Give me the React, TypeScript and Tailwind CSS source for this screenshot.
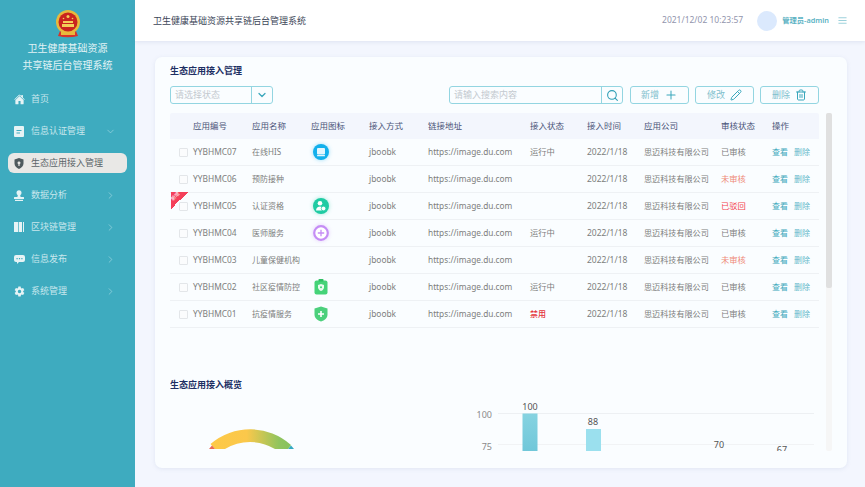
import { IoHome, IoSettingsSharp } from "react-icons/io5";
import { LuPlus, LuPencil, LuTrash2, LuMenu, LuChevronDown, LuChevronRight, LuSearch } from "react-icons/lu";
import type { ReactNode } from "react";

const cols = "grid grid-cols-[23px_59px_59px_58px_59px_102px_57px_57px_77px_51px_47px] items-center";

function Emblem() {
    return (
        <svg width="26" height="28" viewBox="0 0 26 28">
            <path d="M5 21 Q13 28 21 21 L23 26 Q13 28.500 3 26 Z" fill="#d8332a"/>
            <circle cx="13" cy="12" r="12" fill="#e8b93c"/>
            <circle cx="13" cy="12" r="9.500" fill="#c9241f"/>
            <circle cx="13" cy="6.500" r="1.500" fill="#f3cf57"/>
            <circle cx="8.500" cy="8.500" r="0.800" fill="#f3cf57"/>
            <circle cx="17.500" cy="8.500" r="0.800" fill="#f3cf57"/>
            <rect x="8" y="11" width="10" height="2" fill="#f3cf57"/>
            <rect x="7" y="14" width="12" height="3" fill="#f3cf57"/>
            <path d="M6 22 H20 V25 H6 Z" fill="#e8b93c"/>
        </svg>
    );
}

function IconForm() {
    return (
        <svg width="10" height="11" viewBox="0 0 10 11" fill="currentColor">
            <path fillRule="evenodd" d="M1 0h8a1 1 0 0 1 1 1v9a1 1 0 0 1-1 1H1a1 1 0 0 1-1-1V1a1 1 0 0 1 1-1zM2.500 4v1h5V4zM2.500 6.500v1H6v-1z"/>
        </svg>
    );
}

function IconShield() {
    return (
        <svg width="10" height="11" viewBox="0 0 10 11" fill="currentColor">
            <path fillRule="evenodd" d="M5 0l4.500 1.600v4C9.500 8 7.500 10 5 11 2.500 10 .5 8 .5 5.600v-4zM5 3.500a1.400 1.400 0 0 0-.6 2.700V8h1.200V6.200A1.400 1.400 0 0 0 5 3.500z"/>
        </svg>
    );
}

function IconStamp() {
    return (
        <svg width="10" height="11" viewBox="0 0 10 11" fill="currentColor">
            <circle cx="5" cy="2.700" r="2.500"/>
            <path d="M3.800 5h2.400l.4 2H9.500a.5.5 0 0 1 .5.5V9H0V7.500A.5.5 0 0 1 .5 7h2.900z"/>
            <rect x="1" y="9.800" width="8" height="1.200"/>
        </svg>
    );
}

function IconBook() {
    return (
        <svg width="10" height="10" viewBox="0 0 10 10" fill="currentColor">
            <rect x="0" y="0" width="4.300" height="10"/>
            <rect x="5" y="0" width="3" height="10"/>
            <rect x="9" y="0" width="1" height="10"/>
        </svg>
    );
}

function IconChat() {
    return (
        <svg width="11" height="9" viewBox="0 0 11 9" fill="currentColor">
            <path fillRule="evenodd" d="M2 0h7a2 2 0 0 1 2 2v3a2 2 0 0 1-2 2H5L3 9V7H2a2 2 0 0 1-2-2V2a2 2 0 0 1 2-2zM2.500 3v1.200h1.200V3zM4.900 3v1.200h1.200V3zM7.300 3v1.200h1.200V3z"/>
        </svg>
    );
}

function NavItem({icon, label, arrow, active}: { icon: ReactNode; label: string; arrow?: "down" | "right"; active?: boolean }) {
    return (
        <div className={`flex h-5 w-[119px] items-center rounded-md pl-[6px] pr-[11px] ${active ? "bg-[#e9e8e6] text-[#5b6468]" : "text-[#c8e7ed]"}`}>
            <span className={`flex w-[17px] shrink-0 items-center ${active ? "text-[#4f5a5e]" : "text-[#e6f3f5]"}`}>{icon}</span>
            <span className="flex-1 text-[9px]">{label}</span>
            {arrow === "down" && <LuChevronDown strokeWidth={1.5} className="h-[11px] w-[11px] text-[#9fd6e0]"/>}
            {arrow === "right" && <LuChevronRight strokeWidth={1.5} className="h-[11px] w-[11px] text-[#9fd6e0]"/>}
        </div>
    );
}

function Sidebar() {
    return (
        <aside className="flex h-full w-[135px] shrink-0 flex-col items-center bg-[#3eabbf]">
            <div className="mt-[10px]"><Emblem/></div>
            <div className="mt-[2px] text-center text-[10px] leading-[17px] text-[#e2f3f6]">
                <div>卫生健康基础资源</div>
                <div>共享链后台管理系统</div>
            </div>
            <nav className="mt-[15px] flex flex-col gap-3">
                <NavItem icon={<IoHome className="h-[11px] w-[11px]"/>} label="首页"/>
                <NavItem icon={<IconForm/>} label="信息认证管理" arrow="down"/>
                <NavItem icon={<IconShield/>} label="生态应用接入管理" active/>
                <NavItem icon={<IconStamp/>} label="数据分析" arrow="right"/>
                <NavItem icon={<IconBook/>} label="区块链管理" arrow="right"/>
                <NavItem icon={<IconChat/>} label="信息发布" arrow="right"/>
                <NavItem icon={<IoSettingsSharp className="h-[11px] w-[11px]"/>} label="系统管理" arrow="right"/>
            </nav>
        </aside>
    );
}

function Header() {
    return (
        <header className="flex h-[41px] shrink-0 items-center bg-white pl-[18px] pr-[17px] shadow-[0_1px_4px_rgba(120,140,180,0.18)]">
            <span className="flex-1 text-[9px] text-[#3c4658]">卫生健康基础资源共享链后台管理系统</span>
            <span className="text-[8.500px] text-[#9295ad]">2021/12/02 10:23:57</span>
            <span className="ml-[14px] h-5 w-5 rounded-full bg-[#dbe9fd]"/>
            <span className="ml-[5px] text-[7.300px] font-semibold text-[#5db3c4]">管理员-admin</span>
            <LuMenu strokeWidth={1.5} className="ml-[8px] h-[11px] w-[11px] text-[#6fbccb]"/>
        </header>
    );
}

function ActionButton({label, icon}: { label: string; icon: ReactNode }) {
    return (
        <button className="flex h-[18px] w-[59px] items-center justify-center gap-[5px] rounded-[3px] border border-[#93d5e1] text-[9px] text-[#7fc0cd]">
            {label}
            <span className="text-[#3aa7bc]">{icon}</span>
        </button>
    );
}

function Toolbar() {
    return (
        <div className="flex items-center">
            <div className="flex h-[18px] w-[103px] rounded-[3px] border border-[#93d5e1]">
                <span className="flex-1 pl-1 text-[9px] leading-4 text-[#c3c9cf]">请选择状态</span>
                <span className="flex w-[21px] items-center justify-center border-l border-[#93d5e1] text-[#3aa7bc]">
                    <LuChevronDown strokeWidth={2.500} className="h-3 w-3"/>
                </span>
            </div>
            <div className="ml-[176px] flex h-[18px] w-[174px] rounded-[3px] border border-[#93d5e1]">
                <span className="flex-1 pl-1 text-[9px] leading-4 text-[#c3c9cf]">请输入搜索内容</span>
                <span className="flex w-[21px] items-center justify-center border-l border-[#93d5e1] text-[#2f9fb6]">
                    <LuSearch strokeWidth={2} className="h-[13px] w-[13px]"/>
                </span>
            </div>
            <div className="ml-[7px] flex gap-[6px]">
                <ActionButton label="新增" icon={<LuPlus strokeWidth={1.750} className="h-[14px] w-[14px]"/>}/>
                <ActionButton label="修改" icon={<LuPencil strokeWidth={2} className="h-3 w-3"/>}/>
                <ActionButton label="删除" icon={<LuTrash2 strokeWidth={2} className="h-3 w-3"/>}/>
            </div>
        </div>
    );
}

function AppIcon({kind}: { kind: string }) {
    if (kind === "blue") {
        return (
            <svg width="18" height="18" viewBox="0 0 18 18" className="drop-shadow-[0_0_2px_rgba(18,176,236,0.4)]">
                <circle cx="9" cy="9" r="8" fill="#12b0ec"/>
                <rect x="5" y="5" width="8" height="6.500" rx="1" fill="#e4f6fd"/>
                <rect x="5" y="12" width="8" height="1.200" rx=".5" fill="#e4f6fd"/>
            </svg>
        );
    }
    if (kind === "teal") {
        return (
            <svg width="18" height="18" viewBox="0 0 18 18" className="drop-shadow-[0_0_2px_rgba(31,203,163,0.4)]">
                <circle cx="9" cy="9" r="8" fill="#1fcba3"/>
                <circle cx="8" cy="6.300" r="2.300" fill="#fff"/>
                <path d="M4 13.500c0-2.500 2-4 4-4 .8 0 1.300.2 1.800.5v3.500z" fill="#fff"/>
                <circle cx="11.500" cy="11.500" r="2.300" fill="#fff" stroke="#1fcba3" strokeWidth=".7"/>
            </svg>
        );
    }
    if (kind === "purple") {
        return (
            <svg width="18" height="18" viewBox="0 0 18 18" className="drop-shadow-[0_0_2px_rgba(197,141,245,0.4)]">
                <circle cx="9" cy="9" r="6.800" fill="#fff" stroke="#c58df5" strokeWidth="2.200"/>
                <path d="M9 5.800v6.400M5.800 9h6.400" stroke="#c58df5" strokeWidth="1.300"/>
            </svg>
        );
    }
    if (kind === "clip") {
        return (
            <svg width="18" height="18" viewBox="0 0 18 18">
                <rect x="2.500" y="2.500" width="13" height="14" rx="2" fill="#45d378"/>
                <rect x="6.500" y="1" width="5" height="2.500" rx=".8" fill="#2fbf63"/>
                <path d="M9 6l3 1v2.500c0 1.600-1.300 2.800-3 3.500-1.700-.7-3-1.900-3-3.500V7z" fill="#e8fbef"/>
                <circle cx="9" cy="9.300" r="1" fill="#45d378"/>
            </svg>
        );
    }
    return (
        <svg width="18" height="18" viewBox="0 0 18 18">
            <path d="M9 1.500l6.500 2v6c0 3.500-3 6-6.500 7-3.500-1-6.500-3.500-6.500-7v-6z" fill="#4cd07c"/>
            <path d="M9 6v6M6 9h6" stroke="#fff" strokeWidth="1.600"/>
        </svg>
    );
}

const rows = [
    {id: "YYBHMC07", name: "在线HIS", icon: "blue", status: "运行中", audit: "已审核"},
    {id: "YYBHMC06", name: "预防接种", icon: "", status: "", audit: "未审核"},
    {id: "YYBHMC05", name: "认证资格", icon: "teal", status: "", audit: "已驳回", isNew: true},
    {id: "YYBHMC04", name: "医师服务", icon: "purple", status: "运行中", audit: "已审核"},
    {id: "YYBHMC03", name: "儿童保健机构", icon: "", status: "", audit: "未审核"},
    {id: "YYBHMC02", name: "社区疫情防控", icon: "clip", status: "运行中", audit: "已审核"},
    {id: "YYBHMC01", name: "抗疫情服务", icon: "shield", status: "禁用", audit: "已审核"},
];

function auditColor(s: string) {
    if (s === "未审核") return "text-[#ef8a78]";
    if (s === "已驳回") return "text-[#f4444c]";
    return "text-[#7d7d7d]";
}

function Table() {
    return (
        <div className="w-[649px] shrink-0 text-[8px]">
            <div className={`${cols} h-[26px] rounded-t-[2px] bg-[#f3f6fd] text-[8.500px] text-[#4a5478]`}>
                <span/>
                <span>应用编号</span>
                <span>应用名称</span>
                <span>应用图标</span>
                <span>接入方式</span>
                <span>链接地址</span>
                <span>接入状态</span>
                <span>接入时间</span>
                <span>应用公司</span>
                <span>审核状态</span>
                <span>操作</span>
            </div>
            {rows.map((r) => (
                <div key={r.id} className={`${cols} relative h-[27px] border-b border-[#eef1f4] text-[#7d7d7d]`}>
                    {r.isNew && (
                        <div className="absolute -top-px left-px h-[17px] w-[17px] bg-[linear-gradient(135deg,#f4405a_50%,transparent_50%)]">
                            <span className="absolute left-[-1px] top-[1px] origin-center -rotate-45 text-[5px] leading-[6px] text-white">新增</span>
                        </div>
                    )}
                    <span className="ml-[9px] h-[9px] w-[9px] rounded-[1px] border border-[#e3e6e9] bg-[#fbfcfd]"/>
                    <span className="text-[8.400px]">{r.id}</span>
                    <span className="whitespace-nowrap">{r.name}</span>
                    <span className="flex pl-[1px]">{r.icon && <AppIcon kind={r.icon}/>}</span>
                    <span className="text-[8.400px]">jboobk</span>
                    <span className="text-[8.300px]">https://image.du.com</span>
                    <span className={r.status === "禁用" ? "font-medium text-[#e5353c]" : "text-[8.300px]"}>{r.status}</span>
                    <span className="text-[8.500px]">2022/1/18</span>
                    <span className="whitespace-nowrap text-[8.100px]">思迈科技有限公司</span>
                    <span className={`text-[8.300px] ${auditColor(r.audit)}`}>{r.audit}</span>
                    <span className="flex gap-[6px] whitespace-nowrap">
                        <span className="text-[#3fa9bd]">查看</span>
                        <span className="text-[#63b9ca]">删除</span>
                    </span>
                </div>
            ))}
        </div>
    );
}

function Gauge() {
    return (
        <svg width="100" height="24" viewBox="205 430 100 24" className="block">
            <defs>
                <linearGradient id="gaugeFill" x1="0" y1="0" x2="1" y2="0">
                    <stop offset="0" stopColor="#fdc948"/>
                    <stop offset="0.45" stopColor="#fbc84b"/>
                    <stop offset="0.85" stopColor="#90c45e"/>
                    <stop offset="1" stopColor="#86c25c"/>
                </linearGradient>
            </defs>
            <path d="M215 451 L210.500 446 A61 61 0 0 1 291 447 L288 451 L275 451 A48 48 0 0 0 225 451 Z" fill="url(#gaugeFill)"/>
            <path d="M209 451 L212 447.500 L215 451 Z" fill="#ea6a55"/>
            <path d="M288 451 L291 447.500 L294 451 Z" fill="#34a9c2"/>
        </svg>
    );
}

function BarChart() {
    return (
        <svg width="345" height="52" viewBox="475 400 345 52" className="block">
            <defs>
                <linearGradient id="barA" x1="0" y1="0" x2="0" y2="1">
                    <stop offset="0" stopColor="#86d3e1"/>
                    <stop offset="1" stopColor="#70c7d9"/>
                </linearGradient>
            </defs>
            <line x1="498" y1="413.500" x2="814" y2="413.500" stroke="#edf0f3"/>
            <line x1="498" y1="444.500" x2="814" y2="444.500" stroke="#f1f3f5"/>
            <text x="492" y="418" textAnchor="end" fontSize="9" fill="#8b8b8b">100</text>
            <text x="492" y="449.500" textAnchor="end" fontSize="9" fill="#8b8b8b">75</text>
            <rect x="522.500" y="413.500" width="15" height="38" fill="url(#barA)"/>
            <rect x="586" y="429" width="15" height="23" fill="#9be0ee"/>
            <text x="530" y="410" textAnchor="middle" fontSize="9" fill="#555">100</text>
            <text x="593" y="425" textAnchor="middle" fontSize="9" fill="#555">88</text>
            <text x="719" y="447.500" textAnchor="middle" fontSize="9" fill="#555">70</text>
            <text x="782" y="453" textAnchor="middle" fontSize="9" fill="#555">67</text>
        </svg>
    );
}

function Overview() {
    return (
        <div className="w-[649px] shrink-0">
            <div className="mt-[50px] text-[9px] font-bold leading-[14px] text-[#1d2f63]">生态应用接入概览</div>
            <div className="mt-[8px] flex items-end">
                <div className="ml-[35px]"><Gauge/></div>
                <div className="ml-[170px]"><BarChart/></div>
            </div>
        </div>
    );
}

export default function App() {
    return (
        <div className="flex h-screen w-full overflow-hidden bg-[#f3f6fe] font-['Noto_Sans','Noto_Sans_CJK_SC',sans-serif]">
            <Sidebar/>
            <div className="flex min-w-0 flex-1 flex-col">
                <Header/>
                <main className="flex min-h-0 flex-1 flex-col pb-[19px] pl-[20px] pr-[18px] pt-[16px]">
                    <section className="flex min-h-0 flex-1 flex-col overflow-hidden rounded-[7px] bg-[#fafdff] pb-[17px] pl-[15px] pt-[7px] shadow-[0_1px_4px_rgba(120,140,180,0.15)]">
                        <h2 className="text-[9px] font-bold leading-[14px] text-[#1d2f63]">生态应用接入管理</h2>
                        <div className="mt-[8px]"><Toolbar/></div>
                        <div className="mt-[9px] flex min-h-0 flex-1 gap-[7px] overflow-hidden">
                            <div className="min-h-0 w-[649px] overflow-hidden">
                                <Table/>
                                <Overview/>
                            </div>
                            <div className="w-[6px] rounded-[2px] bg-[#f6f6f6]">
                                <div className="h-[175px] rounded-[2px] bg-[#e0e0e0]"/>
                            </div>
                        </div>
                    </section>
                </main>
            </div>
        </div>
    );
}
